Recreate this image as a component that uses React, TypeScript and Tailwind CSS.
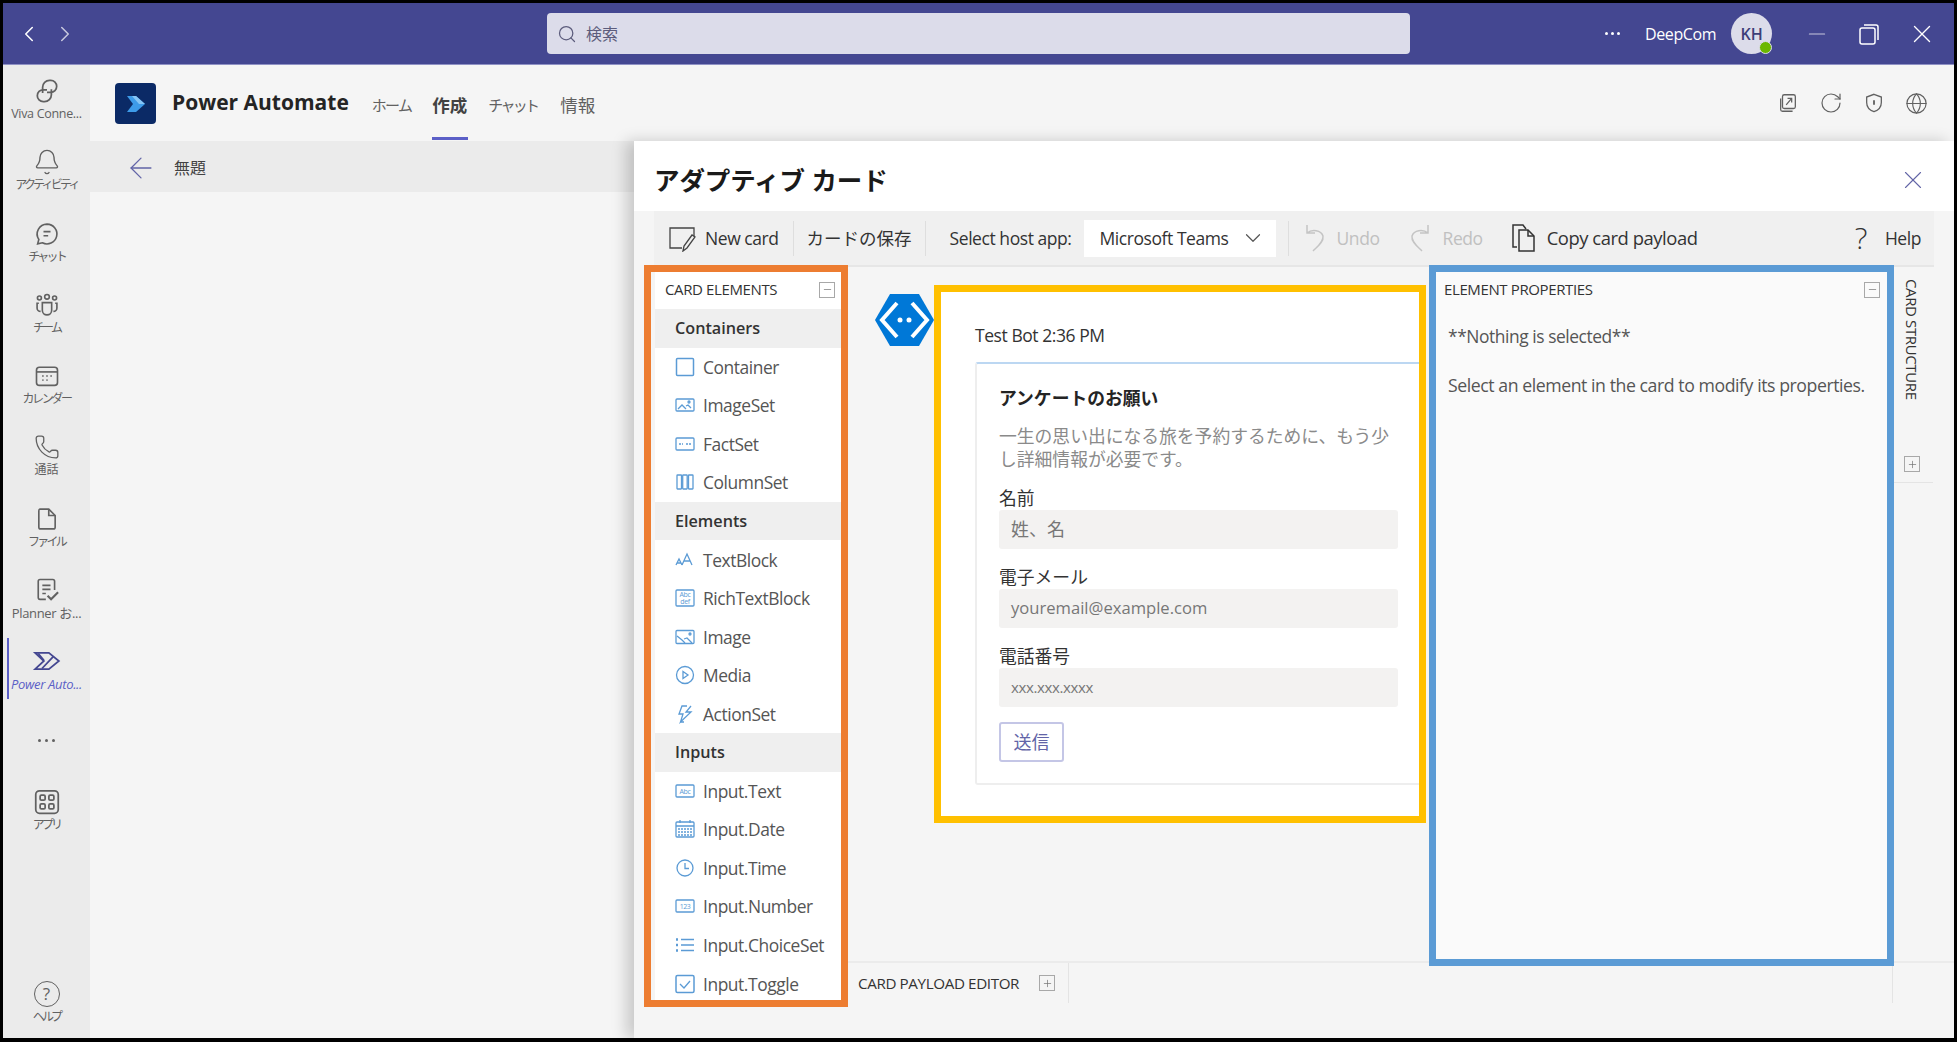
import React from "react";
import {
  ArrowLeft,
  Bell,
  ChevronDown,
  ChevronLeft,
  ChevronRight,
  Globe,
  Minus,
  Phone,
  Plus,
  RotateCw,
  Search,
  X,
} from "lucide-react";

type Glyph = React.ReactNode;

function Svg({ size = 24, children, className = "" }: { size?: number; children: React.ReactNode; className?: string }) {
  return (
    <svg width={size} height={size} viewBox="0 0 24 24" fill="none" stroke="currentColor" strokeWidth="1.4" className={className}>
      {children}
    </svg>
  );
}

const kana = "text-[12px] tracking-[-2.8px]";
const latin = "text-[12.500px] tracking-tight";

const railItems: { label: string; icon: Glyph; text: string; active?: boolean }[] = [
  {
    label: "Viva Conne...",
    text: latin,
    icon: (
      <Svg size={30}>
        <path d="M8.500 13.500V9a5.500 5.500 0 0 1 5.500-5.500h1a4.500 4.500 0 0 1 0 9.500h-3" />
        <path d="M15.500 10.500V15a5.500 5.500 0 0 1-5.500 5.500H9a4.500 4.500 0 0 1 0-9.500h3" />
      </Svg>
    ),
  },
  { label: "アクティビティ", text: kana, icon: <Bell size={28} strokeWidth={1.2} /> },
  {
    label: "チャット",
    text: kana,
    icon: (
      <Svg size={28}>
        <path d="M12 3.500a8.500 8.500 0 1 1-4 16l-4 1 1-3.800A8.500 8.500 0 0 1 12 3.500Z" />
        <path d="M9 10h6M9 13.500h4" />
      </Svg>
    ),
  },
  {
    label: "チーム",
    text: kana,
    icon: (
      <Svg size={28}>
        <circle cx="12" cy="5" r="2" />
        <circle cx="5.500" cy="6" r="1.700" />
        <circle cx="18.500" cy="6" r="1.700" />
        <path d="M8 10h8v6.500a4 4 0 0 1-8 0Z" />
        <path d="M5 10.500H3.500v4a3 3 0 0 0 3 3M19 10.500h1.500v4a3 3 0 0 1-3 3" />
      </Svg>
    ),
  },
  {
    label: "カレンダー",
    text: "text-[12px] tracking-[-2.400px]",
    icon: (
      <Svg size={28}>
        <rect x="3" y="4.500" width="18" height="15.500" rx="2.500" />
        <path d="M3 8.500h18" />
        <path d="M8 12h1M11.500 12h1M15 12h1M8 15.500h1M11.500 15.500h1" strokeWidth="1.600" />
      </Svg>
    ),
  },
  { label: "通話", text: "text-[12px]", icon: <Phone size={26} strokeWidth={1.2} /> },
  {
    label: "ファイル",
    text: kana,
    icon: (
      <Svg size={28}>
        <path d="M6 3.500h7.500L19 9v10a1.500 1.500 0 0 1-1.500 1.500h-11A1.500 1.500 0 0 1 5 19V5a1.500 1.500 0 0 1 1-1.500Z" />
        <path d="M13.500 3.500V9H19" />
      </Svg>
    ),
  },
  {
    label: "Planner お...",
    text: "text-[13px] tracking-tight",
    icon: (
      <Svg size={28}>
        <path d="M11 20H6a1.500 1.500 0 0 1-1.500-1.500v-14A1.500 1.500 0 0 1 6 3h11a1.500 1.500 0 0 1 1.500 1.500V12" />
        <path d="M8 8h7M8 11.500h7M8 15h3" />
        <path d="m12.500 17 3 3 6-6" strokeWidth="1.800" />
      </Svg>
    ),
  },
  {
    label: "Power Auto...",
    text: "text-[13px] tracking-tight",
    active: true,
    icon: (
      <Svg size={30}>
        <path d="M2.500 5.500h11L21.500 12l-8 6.500h-11l7-6.500Z" />
        <path d="m8 18 9-9.500M5 6l4.500 5.500" />
      </Svg>
    ),
  },
];

const appsIcon = (
  <Svg size={30}>
    <rect x="3" y="3" width="18" height="18" rx="3" />
    <rect x="6.500" y="6.500" width="4" height="4" rx="1" />
    <rect x="13.500" y="6.500" width="4" height="4" rx="1" />
    <rect x="6.500" y="13.500" width="4" height="4" rx="1" />
    <rect x="13.500" y="13.500" width="4" height="4" rx="1" />
  </Svg>
);

function RailItem({ label, icon, text, active }: { label: string; icon: Glyph; text: string; active?: boolean }) {
  return (
    <div className="relative flex h-[71.3px] flex-col items-center pt-1">
      {active && <span className="absolute left-[4px] -top-[5px] h-[61px] w-[2px] bg-[#5b5fc7]" />}
      <span className={`flex h-7 items-center ${active ? "text-[#444791]" : "text-[#616161]"}`}>{icon}</span>
      <span className={`mt-[1px] whitespace-nowrap leading-[16px] ${text} ${active ? "italic text-[#5b5fc7]" : "text-[#616161]"}`}>
        {label}
      </span>
    </div>
  );
}

function Rail() {
  return (
    <aside className="flex w-[87px] shrink-0 flex-col bg-[#ebebeb] pt-[8px]">
      {railItems.map((item) => (
        <RailItem key={item.label} {...item} />
      ))}
      <div className="flex h-[52px] items-center justify-center gap-[4px]">
        <span className="h-[3px] w-[3px] rounded-full bg-[#616161]" />
        <span className="h-[3px] w-[3px] rounded-full bg-[#616161]" />
        <span className="h-[3px] w-[3px] rounded-full bg-[#616161]" />
      </div>
      <div className="mt-[17px]">
        <RailItem label="アプリ" text={kana} icon={appsIcon} />
      </div>
      <div className="mt-auto -mb-[9px]">
        <RailItem
          label="ヘルプ"
          text={kana}
          icon={
            <span className="flex h-[26px] w-[26px] items-center justify-center rounded-full border-[1.5px] border-[#616161] text-[17px]">?</span>
          }
        />
      </div>
    </aside>
  );
}

function TopBar() {
  return (
    <header className="flex h-[61px] shrink-0 items-center bg-[#444791] text-white">
      <ChevronLeft size={26} strokeWidth={1.4} className="ml-[13px]" />
      <ChevronRight size={26} strokeWidth={1.4} className="ml-[10px] opacity-70" />
      <div className="ml-[469px] flex h-[41px] w-[863px] items-center rounded-[4px] bg-[#dcdcea] pl-[10px] text-[#5c5c7c]">
        <Search size={20} strokeWidth={1.5} />
        <span className="ml-[9px] text-[16px]">検索</span>
      </div>
      <div className="ml-[195px] flex items-center gap-[3px]">
        <span className="h-[3px] w-[3px] rounded-full bg-white" />
        <span className="h-[3px] w-[3px] rounded-full bg-white" />
        <span className="h-[3px] w-[3px] rounded-full bg-white" />
      </div>
      <span className="ml-[25px] text-[16px] tracking-tight">DeepCom</span>
      <div className="relative ml-[15px] flex h-[41px] w-[41px] items-center justify-center rounded-full bg-[#dcdcea] text-[16px] font-semibold text-[#3d3e78]">
        KH
        <span className="absolute bottom-0 right-0 h-[13px] w-[13px] rounded-full border border-[#dcdcea] bg-[#6bb700]" />
      </div>
      <Minus size={26} strokeWidth={1.1} className="ml-[32px] opacity-70" />
      <svg width="22" height="24" viewBox="0 0 22 24" fill="none" stroke="currentColor" strokeWidth="1.5" className="ml-[28px]">
        <rect x="2" y="6" width="15" height="16" rx="2" />
        <path d="M6 3h12a2 2 0 0 1 2 2v13" />
      </svg>
      <X size={30} strokeWidth={1.1} className="ml-[27px]" />
    </header>
  );
}

function PowerAutomateLogo() {
  return (
    <svg width="41" height="41" viewBox="0 0 41 41">
      <rect width="41" height="41" rx="4" fill="#0b2a66" />
      <path d="M12 13h9l9 8-9 8h-9l6-8Z" fill="#3d9be9" />
      <path d="M17 13h4l9 8-6 0Z" fill="#86c5f5" />
    </svg>
  );
}

function AppHeader() {
  return (
    <div className="flex h-[76px] shrink-0 items-center bg-[#f5f5f5] pl-[25px] text-[#616161]">
      <PowerAutomateLogo />
      <span className="ml-[16px] text-[21px] font-bold text-[#242424]">Power Automate</span>
      <span className="ml-[23px] mt-[5px] text-[15px] tracking-[-1.700px]">ホーム</span>
      <div className="relative ml-[21px] mt-[5px] text-[17.500px] font-bold text-[#424242]">
        作成
        <span className="absolute -bottom-[21px] left-0 h-[3px] w-[36px] bg-[#5b5fc7]" />
      </div>
      <span className="ml-[21px] mt-[5px] text-[15px] tracking-[-2.700px]">チャット</span>
      <span className="ml-[23px] mt-[5px] text-[17.500px]">情報</span>
      <div className="ml-auto mr-[26px] flex items-center gap-[20px] text-[#616161]">
        <Svg size={22}>
          <rect x="6" y="3" width="14" height="15" rx="2" />
          <path d="M4 7v12a2 2 0 0 0 2 2h11M10 14l6-7M11.500 7H16v4.500" />
        </Svg>
        <RotateCw size={24} strokeWidth={1.2} />
        <Svg size={22}>
          <path d="M12 2.500 20 5.500v6c0 5-3.500 8.500-8 10-4.500-1.500-8-5-8-10v-6Z" />
          <path d="M12 9v5" strokeWidth="2" />
        </Svg>
        <Globe size={23} strokeWidth={1.2} />
      </div>
    </div>
  );
}

const blue = "#5b9bd5";

function ElIcon({ children }: { children: React.ReactNode }) {
  return (
    <svg width="20" height="20" viewBox="0 0 20 20" fill="none" stroke={blue} strokeWidth="1.300" className="shrink-0">
      {children}
    </svg>
  );
}

function IconLabel({ x = 10, y, children }: { x?: number; y: number; children: string }) {
  return (
    <text x={x} y={y} textAnchor="middle" fontSize="7" fill={blue} stroke="none">
      {children}
    </text>
  );
}

const sections: { title: string; items: { name: string; icon: Glyph }[] }[] = [
  {
    title: "Containers",
    items: [
      { name: "Container", icon: <rect x="1.500" y="1.500" width="17" height="17" rx="1" strokeWidth="1.500" /> },
      {
        name: "ImageSet",
        icon: (
          <>
            <rect x="1" y="4" width="18" height="12" rx="1" />
            <path d="M3 14l4-4 4 4M11 11l2-1 3 3" />
            <circle cx="14" cy="7" r="1" />
          </>
        ),
      },
      {
        name: "FactSet",
        icon: (
          <>
            <rect x="1" y="4" width="18" height="12" rx="1" />
            <path d="M4 10h4M11 10h5" strokeDasharray="2 1" />
          </>
        ),
      },
      {
        name: "ColumnSet",
        icon: (
          <>
            <rect x="2" y="3" width="4.500" height="14" rx=".5" />
            <rect x="7.700" y="3" width="4.500" height="14" rx=".5" />
            <rect x="13.500" y="3" width="4.500" height="14" rx=".5" />
          </>
        ),
      },
    ],
  },
  {
    title: "Elements",
    items: [
      {
        name: "TextBlock",
        icon: (
          <>
            <path d="M1 15l3-6 3 6M2 13h4" />
            <path d="M7 15l5-11 5 11M9 11h6" />
          </>
        ),
      },
      {
        name: "RichTextBlock",
        icon: (
          <>
            <rect x="1" y="2" width="18" height="16" rx="1" />
            <IconLabel y={9}>Abc</IconLabel>
            <IconLabel y={16}>def</IconLabel>
          </>
        ),
      },
      {
        name: "Image",
        icon: (
          <>
            <rect x="1" y="3.500" width="18" height="13" rx="1" />
            <path d="M2 9l5 4 3 3M9 12l3-1 5 5" />
            <circle cx="15" cy="7" r="1" />
          </>
        ),
      },
      {
        name: "Media",
        icon: (
          <>
            <circle cx="10" cy="10" r="8.500" />
            <path d="M8 6.500v7l5-3.500Z" />
          </>
        ),
      },
      { name: "ActionSet", icon: <path d="M12 2H7L4 10h4l-2.500 8L16 8h-5l5-6M9 18h-4" /> },
    ],
  },
  {
    title: "Inputs",
    items: [
      {
        name: "Input.Text",
        icon: (
          <>
            <rect x="1" y="4" width="18" height="12" rx="1" />
            <IconLabel y={12.500}>Abc</IconLabel>
          </>
        ),
      },
      {
        name: "Input.Date",
        icon: (
          <>
            <rect x="1" y="3" width="18" height="15" rx="1" />
            <path d="M1 7h18M5 1v3M15 1v3" />
            <path d="M3 10h14M3 13h14M3 16h14" strokeDasharray="2 1" />
          </>
        ),
      },
      {
        name: "Input.Time",
        icon: (
          <>
            <circle cx="10" cy="10" r="8" />
            <path d="M10 5v5.500h4" />
          </>
        ),
      },
      {
        name: "Input.Number",
        icon: (
          <>
            <rect x="1" y="4" width="18" height="12" rx="1" />
            <IconLabel y={12.500}>123</IconLabel>
          </>
        ),
      },
      {
        name: "Input.ChoiceSet",
        icon: (
          <>
            <path d="M1 4.500h2M1 10h2M1 15.500h2" strokeWidth="2.500" />
            <path d="M6 4.500h13M6 10h13M6 15.500h13" />
          </>
        ),
      },
      {
        name: "Input.Toggle",
        icon: (
          <>
            <rect x="1" y="1.500" width="18" height="17" rx="1.500" strokeWidth="1.500" />
            <path d="m5 10 4 4 6-7" />
          </>
        ),
      },
    ],
  },
];

function BoxIcon({ plus }: { plus?: boolean }) {
  return (
    <span className="flex h-[16px] w-[16px] shrink-0 items-center justify-center border border-[#a8a8a8] text-[#707070]">
      {plus ? <Plus size={11} strokeWidth={1.5} /> : <Minus size={11} strokeWidth={1.5} />}
    </span>
  );
}

function CardElements() {
  return (
    <div className="-mt-[2px] h-[742px] w-[204px] shrink-0 overflow-hidden border-[7px] border-[#ed7d31] bg-[#f5f5f5] pl-[4px]">
      <div className="h-full bg-white">
        <div className="flex h-[37px] items-center justify-between pb-[2px] pl-[10px] pr-[6px] text-[15px] text-[#333]">
          <span className="tracking-tight">CARD ELEMENTS</span>
          <BoxIcon />
        </div>
        {sections.map((section) => (
          <div key={section.title}>
            <div className="flex h-[38.550px] items-center bg-[#efefef] pl-[20px] text-[16.200px] font-semibold text-[#333]">{section.title}</div>
            {section.items.map((item) => (
              <div key={item.name} className="flex h-[38.550px] items-center gap-[8px] pl-[20px] text-[17.400px] tracking-tight text-[#555]">
                <ElIcon>{item.icon}</ElIcon>
                {item.name}
              </div>
            ))}
          </div>
        ))}
      </div>
    </div>
  );
}

function BotIcon() {
  return (
    <svg width="59" height="52" viewBox="0 0 59 52" className="mt-[27px] ml-[27px] shrink-0">
      <path d="M15 0h29l15 26-15 26H15L0 26Z" fill="#0078d7" />
      <path d="M22 9 7 26l15 17M37 9l15 17-15 17" fill="none" stroke="#fff" strokeWidth="4" />
      <circle cx="25" cy="26" r="2.500" fill="#fff" />
      <circle cx="34" cy="26" r="2.500" fill="#fff" />
    </svg>
  );
}

function Field({ label, placeholder, size }: { label: string; placeholder: string; size: string }) {
  return (
    <div className="mb-[17.500px]">
      <div className="h-[23px] text-[17.800px] leading-[23px] text-[#333]">{label}</div>
      <div className={`flex h-[38.500px] w-[399px] items-center rounded-[3px] bg-[#f3f2f1] pl-[12px] text-[#777] ${size}`}>{placeholder}</div>
    </div>
  );
}

function Preview() {
  return (
    <div className="mt-[18px] h-[538px] w-[492px] shrink-0 overflow-hidden border-[7px] border-[#ffc000] bg-white pl-[34px] pt-[31px]">
      <div className="flex h-[25px] items-center text-[17.500px] tracking-tight text-[#333]">Test Bot 2:36 PM</div>
      <div className="mt-[14px] h-[423px] w-[500px] rounded-[3px] border-2 border-[#eeeeee] border-t-[#bcd7f2] pl-[22px] pt-[21px]">
        <div className="text-[17.800px] font-bold leading-[26px] text-[#242424]">アンケートのお願い</div>
        <div className="mt-[14px] w-[400px] text-[17.800px] leading-[23px] text-[#8a8a8a]">一生の思い出になる旅を予約するために、もう少し詳細情報が必要です。</div>
        <div className="h-[16px]" />
        <Field label="名前" placeholder="姓、名" size="text-[18px]" />
        <Field label="電子メール" placeholder="youremail@example.com" size="text-[16.600px]" />
        <Field label="電話番号" placeholder="xxx.xxx.xxxx" size="text-[15px] tracking-tight" />
        <div className="-mt-[2px] flex h-[40px] w-[65px] items-center justify-center rounded-[3px] border-2 border-[#c4c6e6] text-[18px] text-[#6264a7]">送信</div>
      </div>
    </div>
  );
}

function ElementProperties() {
  return (
    <div className="relative z-10 -mt-[2px] ml-[3px] h-[701px] w-[465px] shrink-0 border-[7px] border-[#5b9bd5] bg-[#fafafa] pl-[8px] pr-[7px] text-[#555]">
      <div className="flex h-[35px] items-center justify-between text-[15px] text-[#333]">
        <span className="tracking-tight">ELEMENT PROPERTIES</span>
        <BoxIcon />
      </div>
      <div className="mt-[17px] pl-[4px] text-[17.400px] leading-[24px] tracking-tight">**Nothing is selected**</div>
      <div className="mt-[25px] whitespace-nowrap pl-[4px] text-[17.700px] leading-[24px] tracking-tight">Select an element in the card to modify its properties.</div>
    </div>
  );
}

function CardStructure() {
  return (
    <div className="h-[216px] w-[39px] shrink-0 border-b border-[#e4e4e4] pl-[10px] pt-[12px]">
      <div className="h-[177px] text-[15px] leading-[16px] tracking-tight text-[#333] [writing-mode:vertical-rl]">CARD STRUCTURE</div>
      <BoxIcon plus />
    </div>
  );
}

function Toolbar() {
  return (
    <div className="mx-[20px] flex h-[56px] shrink-0 items-center border-b-2 border-[#e6e6e6] bg-[#f0f0f0] text-[17.500px] tracking-tight text-[#333]">
      <svg width="28" height="28" viewBox="0 0 28 28" fill="none" stroke="#444" strokeWidth="1.300" className="ml-[14px]">
        <path d="M26 12V4H2v20h12" />
        <path d="m15 27 1-5L24 11l3 2-8 11Z" />
      </svg>
      <span className="ml-[9px]">New card</span>
      <span className="ml-[14px] h-[35px] w-px bg-[#dedede]" />
      <span className="ml-[13px] tracking-normal">カードの保存</span>
      <span className="ml-[13px] h-[35px] w-px bg-[#dedede]" />
      <span className="ml-[24px]">Select host app:</span>
      <div className="ml-[12px] flex h-[37px] w-[192px] items-center bg-white pl-[16px]">
        Microsoft Teams
        <ChevronDown size={26} strokeWidth={1.1} className="ml-auto mr-[10px] text-[#555]" />
      </div>
      <span className="ml-[12px] h-[35px] w-px bg-[#dedede]" />
      <svg width="24" height="30" viewBox="0 0 24 30" fill="none" stroke="#c4c4c4" strokeWidth="1.500" className="ml-[14px]">
        <path d="M4 2v8h8M4 10c5-4 14-3 16 3 1 6-6 11-10 15" />
      </svg>
      <span className="ml-[10px] text-[#c0c0c0]">Undo</span>
      <svg width="24" height="30" viewBox="0 0 24 30" fill="none" stroke="#c4c4c4" strokeWidth="1.500" className="ml-[28px]">
        <path d="M20 2v8h-8M20 10c-5-4-14-3-16 3-1 6 6 11 10 15" />
      </svg>
      <span className="ml-[11px] text-[#c0c0c0]">Redo</span>
      <svg width="26" height="30" viewBox="0 0 26 30" fill="none" stroke="#333" strokeWidth="1.500" className="ml-[28px]">
        <path d="M6 24H2V2h10l3 4" />
        <path d="M8 7h9l6 6v15H8Z" />
        <path d="M17 7v6h6" />
      </svg>
      <span className="ml-[10px] text-[18.400px]">Copy card payload</span>
      <span className="ml-auto text-[30px] font-light leading-none text-[#333]">?</span>
      <span className="ml-[18px] mr-[13px]">Help</span>
    </div>
  );
}

function Panel() {
  return (
    <section className="flex min-w-0 flex-1 flex-col bg-[#f5f5f5] shadow-[-8px_0_14px_rgba(0,0,0,0.18)]">
      <div className="flex h-[70px] shrink-0 items-center justify-between bg-white pl-[20px] pr-[26px] pt-[8px]">
        <h1 className="text-[25.500px] font-bold tracking-[-0.1px] text-[#1a1a1a]">アダプティブ カード</h1>
        <X size={30} strokeWidth={0.9} className="text-[#6264a7]" />
      </div>
      <Toolbar />
      <div className="flex min-h-0 flex-1 pl-[10px]">
        <CardElements />
        <div className="flex min-w-0 flex-1 flex-col">
          <div className="flex h-[694px] shrink-0 items-start">
            <BotIcon />
            <Preview />
            <ElementProperties />
            <CardStructure />
          </div>
          <div className="flex h-[42px] items-center border-t-2 border-[#ebebeb]">
            <span className="ml-[10px] text-[15.200px] tracking-tight text-[#333]">CARD PAYLOAD EDITOR</span>
            <span className="ml-[20px]">
              <BoxIcon plus />
            </span>
            <span className="ml-[13px] h-full w-px bg-[#e4e4e4]" />
            <span className="ml-[823px] h-full w-px bg-[#e4e4e4]" />
          </div>
        </div>
      </div>
    </section>
  );
}

export default function App() {
  return (
    <div className="flex h-[1042px] w-[1957px] flex-col overflow-hidden border-[3px] border-b-[4px] border-black bg-[#f5f5f5] font-['Open_Sans','Noto_Sans_CJK_JP',sans-serif]">
      <TopBar />
      <div className="flex min-h-0 flex-1 border-t border-[#8f91c4]">
        <Rail />
        <main className="flex min-w-0 flex-1 flex-col">
          <AppHeader />
          <div className="flex min-h-0 flex-1">
            <div className="w-[544px] shrink-0">
              <div className="flex h-[51px] items-center bg-[#ebebeb] pl-[34px] pt-[2px] text-[16px] text-[#424242]">
                <ArrowLeft size={34} strokeWidth={0.9} className="text-[#6264a7]" />
                <span className="ml-[16px]">無題</span>
              </div>
            </div>
            <Panel />
          </div>
        </main>
      </div>
    </div>
  );
}
